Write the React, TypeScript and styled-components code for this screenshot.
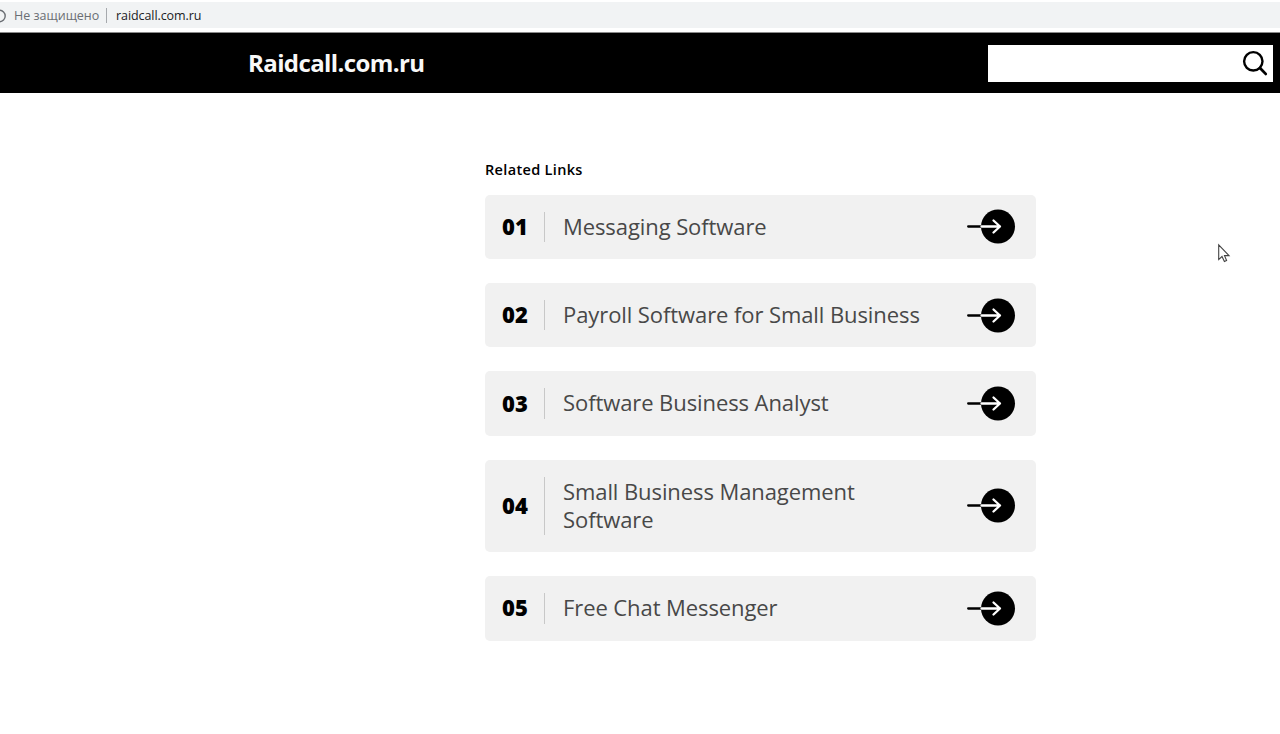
import React from 'react'
import styled, { createGlobalStyle } from 'styled-components'

const GlobalStyle = createGlobalStyle`
  * {
    box-sizing: border-box;
  }

  body {
    margin: 0;
    background: #fff;
    font-family: 'Open Sans', 'Noto Sans', sans-serif;
    overflow: hidden;
  }
`

const Page = styled.div`
  position: relative;
  width: 1280px;
  height: 734px;
  overflow: hidden;
`

const AddressBar = styled.div`
  display: flex;
  align-items: center;
  height: 32px;
  padding-bottom: 1px;
  background: linear-gradient(#fff 2px, #f1f3f4 2px, #f1f3f4 28px, #fff 28px);
  font-size: 12.5px;
  line-height: 18px;
  color: #202124;
`

const InfoIcon = styled.svg`
  flex: none;
  width: 8px;
  height: 16px;
`

const Security = styled.span`
  width: 85px;
  margin-left: 6px;
  color: #6a6e73;
  white-space: nowrap;
`

const BarDivider = styled.span`
  width: 1px;
  height: 15px;
  margin: 0 9px 0 7px;
  background: #a6a9ad;
`

const Domain = styled.span`
  letter-spacing: -0.08px;
`

const Header = styled.header`
  display: flex;
  align-items: center;
  justify-content: space-between;
  height: 61px;
  padding: 0 7px 0 248px;
  border-top: 1px solid #8a8a8a;
  background: #000;
`

const SiteName = styled.h1`
  margin: 0;
  color: #f8f8f8;
  font-size: 24px;
  font-weight: 700;
  line-height: 32px;
  letter-spacing: -0.6px;
`

const SearchBox = styled.div`
  display: flex;
  align-items: center;
  justify-content: flex-end;
  width: 285px;
  height: 37px;
  padding-right: 5px;
  background: #fff;
`

const Main = styled.main`
  width: 551px;
  margin: 67px 0 0 485px;
`

const Caption = styled.h2`
  margin: 0 0 14.8px;
  font-size: 14.5px;
  font-weight: 600;
  line-height: 20px;
  letter-spacing: 0.33px;
  color: #000;
`

const List = styled.div`
  display: flex;
  flex-direction: column;
  gap: 24px;
`

const Row = styled.a`
  display: flex;
  align-items: center;
  padding: 17px 20px 19px 17px;
  border-radius: 5px;
  background: #f1f1f1;
`

const Index = styled.span`
  width: 42px;
  padding-top: 1px;
  font-size: 22px;
  font-weight: 800;
  line-height: 27px;
  color: #000;
`

const Label = styled.span`
  position: relative;
  flex: 1;
  padding-left: 19px;
  font-size: 22px;
  line-height: 28.3px;
  letter-spacing: -0.085px;
  color: #484848;

  &::before {
    content: '';
    position: absolute;
    top: 0;
    bottom: -2px;
    left: 0;
    width: 1px;
    background: #c8c8c8;
  }
`

const Arrow = styled.svg`
  flex: none;
  width: 50px;
  height: 34px;
  margin: -4px 0 -5px 24px;
`

const Cursor = styled.svg`
  position: absolute;
  left: 1217px;
  top: 243px;
  width: 14px;
  height: 21px;
`

const links = [
  'Messaging Software',
  'Payroll Software for Small Business',
  'Software Business Analyst',
  'Small Business Management Software',
  'Free Chat Messenger',
]

const ArrowIcon = () => (
  <Arrow viewBox="0 0 50 34" overflow="visible" fill="none" strokeLinecap="round" strokeLinejoin="round">
    <circle cx="32" cy="17.5" r="17" fill="#000" />
    <path d="M2.2 17.5H16" stroke="#000" strokeWidth="2.3" />
    <path d="M15.5 17.5H34M27.5 11.5L34 17.5L27.5 23.5" stroke="#fff" strokeWidth="2.3" />
  </Arrow>
)

const App = () => {
  return (
    <Page>
      <GlobalStyle />
      <AddressBar>
        <InfoIcon viewBox="0 0 8 16" fill="none">
          <circle cx="-0.5" cy="8" r="5.7" stroke="#6a6e73" strokeWidth="1.4" />
        </InfoIcon>
        <Security>Не защищено</Security>
        <BarDivider />
        <Domain>raidcall.com.ru</Domain>
      </AddressBar>
      <Header>
        <SiteName>Raidcall.com.ru</SiteName>
        <SearchBox>
          <svg width="26" height="26" viewBox="0 0 26 26" fill="none" stroke="#000" strokeLinecap="round">
            <circle cx="11.3" cy="11.3" r="9.2" strokeWidth="2.4" />
            <path d="M18 18L23.7 23.9" strokeWidth="2.8" />
          </svg>
        </SearchBox>
      </Header>
      <Main>
        <Caption>Related Links</Caption>
        <List>
          {links.map((link, i) => (
            <Row key={link}>
              <Index>{`0${i + 1}`}</Index>
              <Label>{link}</Label>
              <ArrowIcon />
            </Row>
          ))}
        </List>
      </Main>
      <Cursor viewBox="0 0 14 21">
        <path
          d="M1.7 1.8V16.6L5 13.5L7.4 18.5L9.6 17.5L7.5 12.6H12Z"
          fill="#fff"
          stroke="#444"
          strokeWidth="1.1"
        />
      </Cursor>
    </Page>
  )
}

export default App
